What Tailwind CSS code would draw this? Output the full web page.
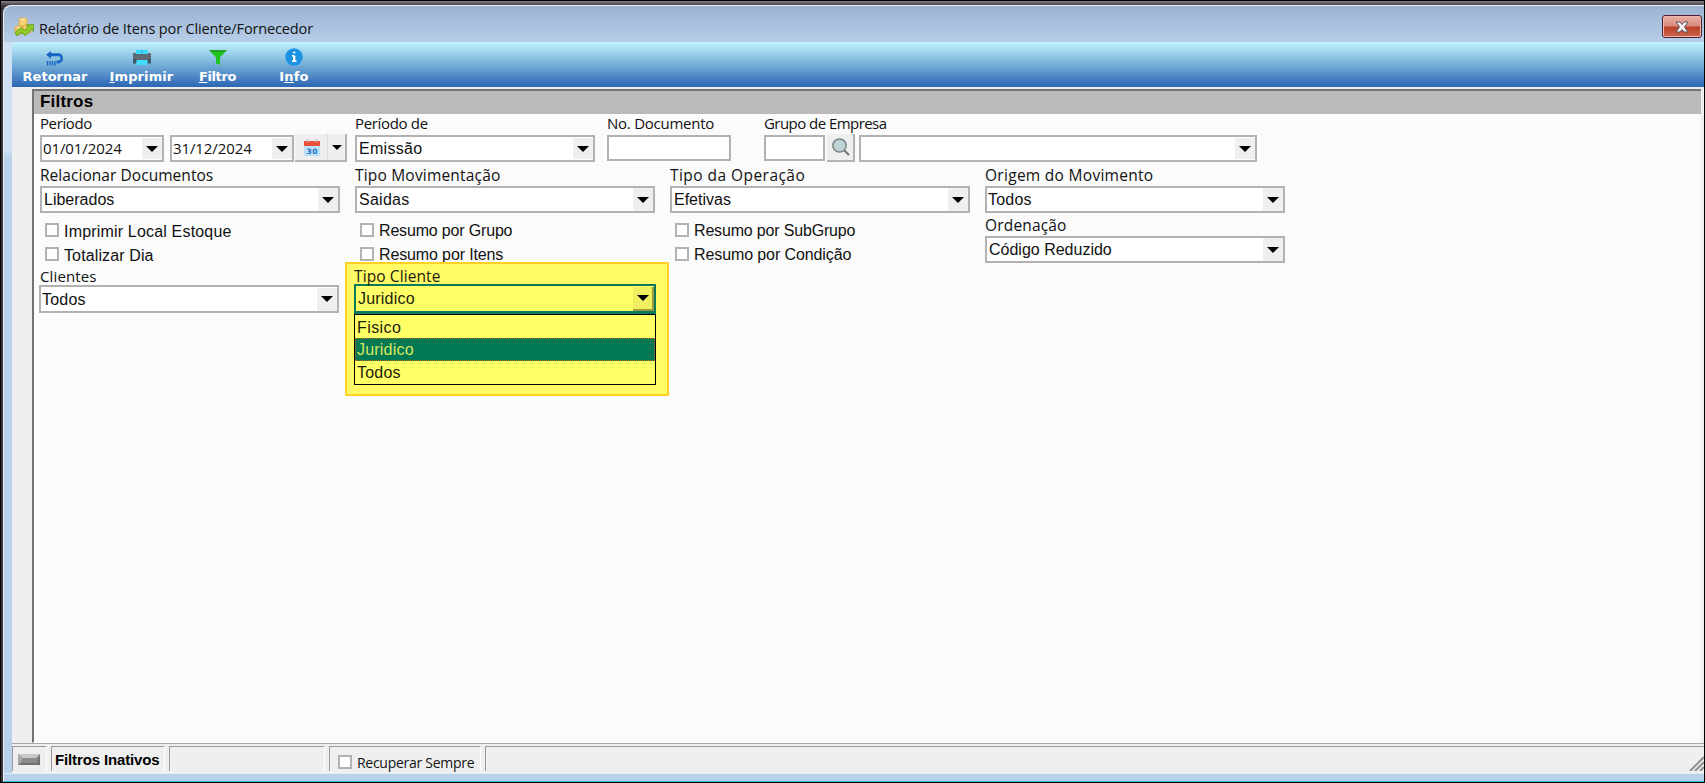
<!DOCTYPE html>
<html lang="pt-BR">
<head>
    <meta charset="UTF-8">
    <meta name="viewport" content="width=device-width, initial-scale=1.0">
    <title>Relatório de Itens por Cliente/Fornecedor</title>
    <script src="https://cdn.jsdelivr.net/npm/@tailwindcss/browser@4"></script>
</head>
<body class="w-[1705px] h-[783px] overflow-hidden bg-black text-[#111] font-['Liberation_Sans',sans-serif] text-[16px]">
    <svg class="hidden">
        <symbol id="arrow" viewBox="0 0 12 6"><path d="M0 0h12L6 6z" fill="#000"/></symbol>
    </svg>

    <div class="w-[1704px] h-[782px] pt-px pl-px bg-black">
        <div class="h-full pt-1 pl-[2px] bg-gradient-to-b from-[#85808a] from-0% to-[#3c3638] to-[5px]">
            <div class="flex flex-col h-full rounded-tl-lg border-t border-l border-[#e8f0f8] border-b border-b-[#2fbcd8] bg-gradient-to-b from-[#cfe0f2] from-[145px] to-[#b9d1ea] to-[152px]">

                <!-- title bar -->
                <header class="flex shrink-0 h-9 pl-[10px] pr-[2px] rounded-tl-lg bg-gradient-to-b from-[#9bb4d2] to-[#b7cee9]">
                    <svg class="w-5 h-5 mt-[11px]" viewBox="0 0 20 20">
                        <rect x="5" y="1" width="8" height="8" rx="1.5" fill="#f5cf70" stroke="#d9a53c" stroke-width=".7"/>
                        <rect x="1" y="9" width="8" height="8" rx="1.5" fill="#efc566" stroke="#d9a53c" stroke-width=".7"/>
                        <rect x="9" y="8" width="8" height="8" rx="1.5" fill="#f0c868" stroke="#d9a53c" stroke-width=".7"/>
                        <path d="M7 2.500h4M3 10.500h3" stroke="#fdeeb8" stroke-width="1.500"/>
                        <path d="M1 15.500l6-5 4 3 3-4-2-1.500 7.500-.5v7l-2-2-6 6-4.500-3-4 3.500z" fill="#8fca28" stroke="#5d9a12" stroke-width=".8"/>
                    </svg>
                    <h1 class="ml-[5px] mt-[12px] leading-[22px] font-['Open_Sans',sans-serif] text-[14.5px] tracking-[-0.14px] whitespace-nowrap">Relatório de Itens por Cliente/Fornecedor</h1>
                    <button class="flex items-center justify-center ml-auto mt-[9px] w-10 h-[23px] rounded-[3px] border border-[#4c1f33] bg-[#edb9ae]">
                        <span class="flex items-center justify-center w-9 h-[19px] bg-[linear-gradient(#e8aea2,#d98a7c_48%,#b93f28_52%,#cc6148)]">
                            <svg class="w-[14px] h-3" viewBox="0 0 14 12"><path d="M1 1h4l2 2.500L9 1h4L9.500 6 13 11H9L7 8.500 5 11H1l3.500-5z" fill="#f4f4f4" stroke="#59545f" stroke-width="1"/></svg>
                        </span>
                    </button>
                </header>

                <div class="flex flex-col grow pl-2 min-h-0">
                    <!-- toolbar -->
                    <nav class="flex shrink-0 h-[45px] pl-[11px] bg-gradient-to-b from-[#c1f3fb] via-[#76afd8] to-[#2c65b2] font-['DejaVu_Sans',sans-serif] font-bold text-[13px] text-white">
                        <a class="flex flex-col items-center w-[64px]">
                            <svg class="w-[18px] h-[15px] mt-[9px]" viewBox="0 0 18 15">
                                <path d="M0 3.800L5 0v2.200h7.500a5.200 5.200 0 0 1 0 10.300H10.500V9.600h1.800a2.200 2.200 0 0 0 0-4.400H5v2.600z" fill="#1766c4"/>
                                <path d="M1.500 10v4.500M4 10v4.500M6.500 10v4.500M9 10v4.500" stroke="#1766c4" stroke-width="1.300"/>
                            </svg>
                            <span class="mt-[3px] leading-4">Retornar</span>
                        </a>
                        <a class="flex flex-col items-center w-[65px] ml-[22px]">
                            <svg class="w-[18px] h-[15px] mt-2" viewBox="0 0 18 15">
                                <rect x="3" width="12" height="5" rx="1" fill="#2ad7fb"/>
                                <rect y="3" width="18" height="10" rx="1" fill="#606a74"/>
                                <rect y="9" width="3" height="4.500" fill="#3c5868"/>
                                <rect x="15" y="9" width="3" height="4.500" fill="#3c5868"/>
                                <rect x="3" y="1" width="12" height="3" fill="#35dcfc"/>
                                <rect x="3.500" y="10" width="11" height="5" rx="1" fill="#42dcfc"/>
                                <rect x="8" y="1" width="2" height="1.500" fill="#6d8fd8"/>
                            </svg>
                            <span class="mt-1 leading-4 tracking-[0.1px]"><u>I</u>mprimir</span>
                        </a>
                        <a class="flex flex-col items-center w-[37px] ml-[25px]">
                            <svg class="w-[18px] h-[15px] mt-2" viewBox="0 0 18 15">
                                <path d="M0 0h18l-7 7.500V15L7 13.500v-6z" fill="#1fc41f"/>
                                <path d="M0 0h18l-2 2H2z" fill="#22a02c"/>
                            </svg>
                            <span class="mt-1 leading-4 tracking-[-0.35px]"><u>F</u>iltro</span>
                        </a>
                        <a class="flex flex-col items-center w-[30px] ml-[43px]">
                            <svg class="w-[18px] h-[18px] mt-[6px]" viewBox="0 0 18 18">
                                <circle cx="9" cy="9" r="8.700" fill="#1b93e2"/>
                                <path d="M9.200 7.500V13" stroke="#fff" stroke-width="2.400" fill="none"/>
                                <path d="M7 7.800h2M7 13.200h4.500M8 4.500h2.400" stroke="#fff" stroke-width="1.600" fill="none"/>
                            </svg>
                            <span class="mt-[3px] leading-4 tracking-[0.2px]">I<u>n</u>fo</span>
                        </a>
                    </nav>

                    <div class="flex flex-col grow min-h-0 pt-[2px] bg-[#efefef]">
                        <!-- filter panel -->
                        <main class="flex flex-col shrink-0 h-[654px] ml-5 mr-[3px] border-t-2 border-l-2 border-[#737373] border-b border-b-white bg-[#fbfbfb]">
                            <h2 class="shrink-0 h-[23px] pl-[6px] leading-[22px] bg-[#bababa] font-bold text-[17px] tracking-[0.2px] text-black">Filtros</h2>

                            <section class="pl-[6px]">
                                <div class="flex h-[48px]">
                                    <div class="w-[315px]">
                                        <label class="block h-[21px] leading-[18px] font-['Open_Sans',sans-serif] text-[15px] tracking-[-0.4px]">Período</label>
                                        <div class="flex">
                                            <div class="flex items-center w-[124px] h-[27px] pl-px border-2 border-[#b2b2b2] bg-white">
                                                <span class="font-['Open_Sans',sans-serif] text-[15px] leading-[20px] tracking-[-0.1px] -mt-[2px]">01/01/2024</span>
                                                <span class="flex items-center justify-center ml-auto w-5 h-[21px] bg-[#efefef]"><svg class="w-3 h-[6px]"><use href="#arrow"/></svg></span>
                                            </div>
                                            <div class="flex items-center w-[124px] h-[27px] ml-[6px] pl-px border-2 border-[#b2b2b2] bg-white">
                                                <span class="font-['Open_Sans',sans-serif] text-[15px] leading-[20px] tracking-[-0.1px] -mt-[2px]">31/12/2024</span>
                                                <span class="flex items-center justify-center ml-auto w-5 h-[21px] bg-[#efefef]"><svg class="w-3 h-[6px]"><use href="#arrow"/></svg></span>
                                            </div>
                                            <button class="flex items-center w-[52px] h-[28px] -mt-px ml-px border-b-2 border-r-2 border-[#b2b2b2] bg-[#efefef]">
                                                <span class="flex items-center justify-center w-[33px] h-full pl-[2px] border-r border-[#dcdcdc]">
                                                    <svg class="w-4 h-[17px]" viewBox="0 0 16 17">
                                                        <rect y="4" width="16" height="13" fill="#bde0fb"/>
                                                        <path d="M0 2h16v5H0z" fill="#e8503c"/>
                                                        <path d="M3.500 0v3.500M12.500 0v3.500" stroke="#c9b4b4" stroke-width="1.500"/>
                                                        <text x="8" y="14.500" text-anchor="middle" textLength="11" font-family="DejaVu Sans" font-weight="bold" font-size="7.500" fill="#1d6fc4">30</text>
                                                    </svg>
                                                </span>
                                                <svg class="w-[10px] h-[5px] ml-[4px]"><use href="#arrow"/></svg>
                                            </button>
                                        </div>
                                    </div>
                                    <div class="w-[252px]">
                                        <label class="block h-[21px] leading-[18px] font-['Open_Sans',sans-serif] text-[15px] tracking-[-0.33px]">Período de</label>
                                        <div class="flex items-center w-[240px] h-[27px] pl-[2px] border-2 border-[#b2b2b2] bg-white">
                                            <span class="tracking-[0.3px]">Emissão</span>
                                            <span class="flex items-center justify-center ml-auto w-5 h-[21px] bg-[#efefef]"><svg class="w-3 h-[6px]"><use href="#arrow"/></svg></span>
                                        </div>
                                    </div>
                                    <div class="w-[157px]">
                                        <label class="block h-[21px] leading-[18px] font-['Open_Sans',sans-serif] text-[15px] tracking-[-0.25px]">No. Documento</label>
                                        <div class="w-[124px] h-[26px] border-2 border-[#b2b2b2] bg-white"></div>
                                    </div>
                                    <div>
                                        <label class="block h-[21px] leading-[18px] font-['Open_Sans',sans-serif] text-[15px] tracking-[-0.55px]">Grupo de Empresa</label>
                                        <div class="flex">
                                            <div class="w-[61px] h-[26px] border-2 border-[#b2b2b2] bg-white"></div>
                                            <button class="flex items-center justify-center w-7 h-[28px] -mt-px ml-[2px] pl-px border-b-2 border-r-2 border-[#b2b2b2] bg-[#efefef]">
                                                <svg class="w-[18px] h-[18px]" viewBox="0 0 18 18">
                                                    <path d="M11.500 11.500L17 17" stroke="#777" stroke-width="2.200"/>
                                                    <circle cx="7.500" cy="7.500" r="6.600" fill="#bdd3d6" stroke="#788584" stroke-width="1.500"/>
                                                </svg>
                                            </button>
                                            <div class="flex items-center w-[398px] h-[27px] ml-[4px] border-2 border-[#b2b2b2] bg-white">
                                                <span class="flex items-center justify-center ml-auto w-5 h-[21px] bg-[#efefef]"><svg class="w-3 h-[6px]"><use href="#arrow"/></svg></span>
                                            </div>
                                        </div>
                                    </div>
                                </div>

                                <div class="flex h-[51px]">
                                    <div class="w-[315px]">
                                        <label class="block h-6 leading-[27px] font-['Open_Sans',sans-serif] text-[15.5px] tracking-[0.05px]">Relacionar Documentos</label>
                                        <div class="flex items-center w-[300px] h-[27px] pl-[2px] border-2 border-[#b2b2b2] bg-white">
                                            <span>Liberados</span>
                                            <span class="flex items-center justify-center ml-auto w-5 h-[23px] bg-[#efefef]"><svg class="w-3 h-[6px]"><use href="#arrow"/></svg></span>
                                        </div>
                                    </div>
                                    <div class="w-[315px]">
                                        <label class="block h-6 leading-[27px] font-['Open_Sans',sans-serif] text-[15.5px] tracking-[0.19px]">Tipo Movimentação</label>
                                        <div class="flex items-center w-[300px] h-[27px] pl-[2px] border-2 border-[#b2b2b2] bg-white">
                                            <span class="tracking-[0.25px]">Saidas</span>
                                            <span class="flex items-center justify-center ml-auto w-5 h-[23px] bg-[#efefef]"><svg class="w-3 h-[6px]"><use href="#arrow"/></svg></span>
                                        </div>
                                    </div>
                                    <div class="w-[315px]">
                                        <label class="block h-6 leading-[27px] font-['Open_Sans',sans-serif] text-[15.5px] tracking-[0.45px]">Tipo da Operação</label>
                                        <div class="flex items-center w-[300px] h-[27px] pl-[2px] border-2 border-[#b2b2b2] bg-white">
                                            <span>Efetivas</span>
                                            <span class="flex items-center justify-center ml-auto w-5 h-[23px] bg-[#efefef]"><svg class="w-3 h-[6px]"><use href="#arrow"/></svg></span>
                                        </div>
                                    </div>
                                    <div>
                                        <label class="block h-6 leading-[27px] font-['Open_Sans',sans-serif] text-[15.5px] tracking-[0.29px]">Origem do Movimento</label>
                                        <div class="flex items-center w-[300px] h-[27px] pl-px border-2 border-[#b2b2b2] bg-white">
                                            <span class="tracking-[0.2px]">Todos</span>
                                            <span class="flex items-center justify-center ml-auto w-5 h-[23px] bg-[#efefef]"><svg class="w-3 h-[6px]"><use href="#arrow"/></svg></span>
                                        </div>
                                    </div>
                                </div>

                                <div class="flex h-[53px]">
                                    <div class="w-[315px] pl-[5px] pt-[10px]">
                                        <div class="flex h-6"><i class="w-[14px] h-[14px] mr-[5px] border-2 border-[#b2b2b2] bg-white"></i><span class="leading-[18px] tracking-[0.18px]">Imprimir Local Estoque</span></div>
                                        <div class="flex h-6"><i class="w-[14px] h-[14px] mr-[5px] border-2 border-[#b2b2b2] bg-white"></i><span class="leading-[18px] tracking-[0.12px]">Totalizar Dia</span></div>
                                    </div>
                                    <div class="w-[315px] pl-[5px] pt-[10px]">
                                        <div class="flex h-6"><i class="w-[14px] h-[14px] mr-[5px] border-2 border-[#b2b2b2] bg-white"></i><span class="leading-[16px] tracking-[-0.17px]">Resumo por Grupo</span></div>
                                        <div class="flex h-6"><i class="w-[14px] h-[14px] mr-[5px] border-2 border-[#b2b2b2] bg-white"></i><span class="leading-[16px] tracking-[-0.13px]">Resumo por Itens</span></div>
                                    </div>
                                    <div class="w-[315px] pl-[5px] pt-[10px]">
                                        <div class="flex h-6"><i class="w-[14px] h-[14px] mr-[5px] border-2 border-[#b2b2b2] bg-white"></i><span class="leading-[16px] tracking-[-0.17px]">Resumo por SubGrupo</span></div>
                                        <div class="flex h-6"><i class="w-[14px] h-[14px] mr-[5px] border-2 border-[#b2b2b2] bg-white"></i><span class="leading-[16px] tracking-[-0.1px]">Resumo por Condição</span></div>
                                    </div>
                                    <div>
                                        <label class="block h-[23px] leading-[25px] font-['Open_Sans',sans-serif] text-[15.5px] tracking-[0.17px]">Ordenação</label>
                                        <div class="flex items-center w-[300px] h-[27px] pl-[2px] border-2 border-[#b2b2b2] bg-white">
                                            <span>Código Reduzido</span>
                                            <span class="flex items-center justify-center ml-auto w-5 h-[23px] bg-[#efefef]"><svg class="w-3 h-[6px]"><use href="#arrow"/></svg></span>
                                        </div>
                                    </div>
                                </div>

                                <div class="flex items-start">
                                    <div class="w-[306px] -ml-px">
                                        <label class="block h-[19px] pl-px leading-[21px] font-['Open_Sans',sans-serif] text-[15px] tracking-[0.12px]">Clientes</label>
                                        <div class="flex items-center w-[300px] h-[28px] pl-px border-2 border-[#b2b2b2] bg-white">
                                            <span class="pt-px tracking-[0.2px]">Todos</span>
                                            <span class="flex items-center justify-center ml-auto w-5 h-[23px] bg-[#efefef]"><svg class="w-3 h-[6px]"><use href="#arrow"/></svg></span>
                                        </div>
                                    </div>
                                    <!-- highlighted field with its list open -->
                                    <div class="w-[324px] h-[134px] -mt-1 px-[7px] border-2 border-[#ffd127] bg-[#fffa66] text-[#1c1c0c]">
                                        <label class="block h-[20px] leading-[25px] font-['Open_Sans',sans-serif] text-[15.5px] tracking-[0.1px]">Tipo Cliente</label>
                                        <div class="flex items-center w-[302px] h-[30px] pl-[2px] border-2 border-b-[3px] border-[#0b7a5b] bg-[#ffff66]">
                                            <span class="pt-px tracking-[0.2px]">Juridico</span>
                                            <span class="flex items-center justify-center ml-auto w-[21px] h-6 border-r-2 border-b-2 border-[#a09a3c] bg-[#efef60]"><svg class="w-3 h-[6px]"><use href="#arrow"/></svg></span>
                                        </div>
                                        <ul class="w-[302px] h-[71px] border border-black bg-[#ffff66]">
                                            <li class="h-[23px] pl-[2px] leading-[25px] tracking-[0.4px]">Fisico</li>
                                            <li class="h-[23px] pl-px leading-[22px] border border-dotted border-[#c86a10] bg-[#007854] text-[#d8e85c] tracking-[0.2px]">Juridico</li>
                                            <li class="h-[23px] pl-[2px] leading-[23px] tracking-[0.2px]">Todos</li>
                                        </ul>
                                    </div>
                                </div>
                            </section>
                        </main>

                        <!-- status bar -->
                        <footer class="flex items-stretch gap-1 h-[29px] pt-[2px] pb-px border-t border-[#a6a6a6]">
                            <div class="flex items-center justify-center w-[35px] pr-[2px] border-t border-l border-[#999] border-r border-r-white">
                                <svg class="w-[22px] h-[11px]" viewBox="0 0 22 11">
                                    <path d="M0 0h22v11H0z" fill="#8c8c8c"/>
                                    <path d="M0 0h22l-4 4H5L0 11z" fill="#c9c9c9"/>
                                    <path d="M0 0l5 4-5 7z" fill="#a8a8a8"/>
                                    <path d="M22 0v11H0l4-2h15z" fill="#707070"/>
                                </svg>
                            </div>
                            <div class="w-[114px] pl-[3px] border-t border-l border-[#999] border-r border-r-white leading-[26px] font-bold text-[15px] tracking-[-0.14px] text-black whitespace-nowrap">Filtros Inativos</div>
                            <div class="w-[156px] border-t border-l border-[#999] border-r border-r-white"></div>
                            <div class="flex w-[152px] pl-2 border-t border-l border-[#999] border-r border-r-white">
                                <i class="w-[14px] h-[14px] mt-2 mr-[5px] border-2 border-[#b2b2b2] bg-white"></i>
                                <span class="mt-[5px] leading-[21px] font-['Open_Sans',sans-serif] text-[14px] tracking-[-0.28px] whitespace-nowrap">Recuperar Sempre</span>
                            </div>
                            <div class="flex grow items-end justify-end border-t border-l border-[#999]">
                                <svg class="w-[15px] h-[15px]" viewBox="0 0 15 15"><path d="M1 15L15 1M6 15l9-9M11 15l4-4" stroke="#8f8f8f" stroke-width="2"/></svg>
                            </div>
                        </footer>
                    </div>
                </div>

                <div class="shrink-0 h-[8px] border-t border-[#e4eefa] bg-[#b9d1ea]"></div>
            </div>
        </div>
    </div>
</body>
</html>
